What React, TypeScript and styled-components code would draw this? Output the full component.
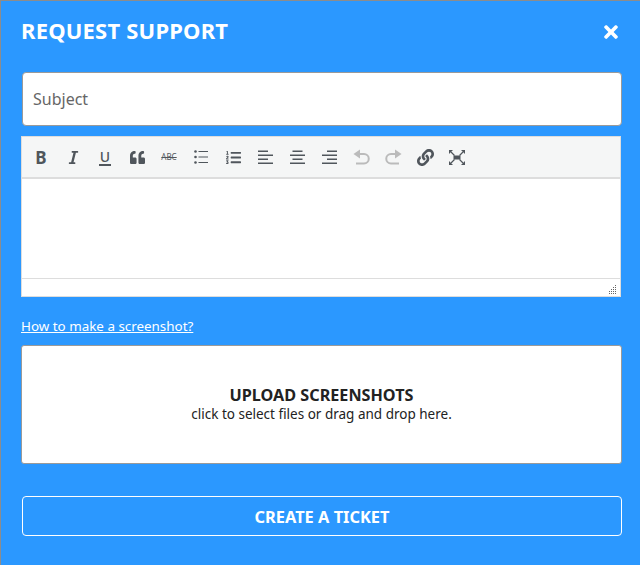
import React from "react";
import styled, { createGlobalStyle } from "styled-components";
import { FaItalic, FaQuoteLeft, FaLink, FaListOl, FaTimes } from "react-icons/fa";

const GlobalStyle = createGlobalStyle`
  html, body {
    margin: 0;
    padding: 0;
    background: #2b98ff;
  }
  * {
    box-sizing: border-box;
  }
`;

const Modal = styled.div`
  width: 640px;
  height: 565px;
  padding: 0 18px 0 21px;
  background: #2b98ff;
  border-top: 1px solid #8c8c8c;
  border-left: 1px solid #8c8c8c;
  font-family: "Noto Sans", "Open Sans", sans-serif;
  overflow: hidden;
`;

const Header = styled.div`
  display: flex;
  justify-content: space-between;
  align-items: center;
  height: 60px;
`;

const Title = styled.h2`
  margin: 0 0 2px -1px;
  font-size: 22px;
  font-weight: 700;
  color: #fff;
  letter-spacing: 0.2px;
`;

const CloseButton = styled.button`
  display: flex;
  padding: 0;
  margin: 2px 1px 0 0;
  border: 0;
  background: none;
  color: #fff;
  font-size: 20px;
`;

const SubjectInput = styled.input`
  display: block;
  width: 600px;
  height: 54px;
  margin: 11px 0 10px 0;
  padding: 0 10px;
  border: 1px solid #9a9a9a;
  border-radius: 4px;
  background: #fff;
  font-family: inherit;
  font-size: 16px;
  color: #333;
  &::placeholder {
    color: #666;
    opacity: 1;
  }
`;

const Editor = styled.div`
  width: 600px;
  margin-left: -1px;
  border: 1px solid #ddd;
  background: #fff;
`;

const Toolbar = styled.div`
  display: flex;
  align-items: center;
  height: 42px;
  padding-left: 3px;
  background: #f5f6f6;
  border-bottom: 2px solid #ddd;
`;

const ToolButton = styled.span<{ $disabled?: boolean; $size?: number }>`
  display: flex;
  align-items: center;
  justify-content: center;
  width: 32px;
  height: 30px;
  color: ${(props) => (props.$disabled ? "#bbb" : "#50565c")};
  font-size: ${(props) => props.$size || 14}px;
`;

const BoldGlyph = styled.span`
  font-size: 17px;
  font-weight: 700;
  line-height: 1;
`;

const UnderGlyph = styled.span`
  font-size: 14px;
  font-weight: 500;
  line-height: 15px;
  padding: 0 1px;
  border-bottom: 2px solid currentColor;
`;

const StrikeGlyph = styled.span`
  font-size: 8px;
  line-height: 1;
  text-decoration: line-through;
`;

const EditArea = styled.div`
  height: 100px;
  border-bottom: 1px solid #ddd;
`;

const StatusBar = styled.div`
  display: flex;
  justify-content: flex-end;
  align-items: flex-end;
  height: 17px;
  padding: 0 3px 2px 0;
`;

const HelpLink = styled.a`
  display: block;
  margin: 19px 0 9px -1px;
  font-size: 13.4px;
  line-height: 20px;
  color: #fff;
  text-decoration: underline;
`;

const DropZone = styled.div`
  display: flex;
  flex-direction: column;
  align-items: center;
  justify-content: center;
  width: 601px;
  height: 119px;
  margin-left: -1px;
  border: 1px solid #9a9a9a;
  border-radius: 3px;
  background: #fff;
  color: #222;
`;

const DropTitle = styled.div`
  font-size: 16.2px;
  font-weight: 700;
  line-height: 19px;
`;

const DropHint = styled.div`
  font-size: 13.5px;
  line-height: 19px;
`;

const SubmitButton = styled.button`
  display: block;
  width: 600px;
  height: 40px;
  margin-top: 32px;
  border: 1px solid #fff;
  border-radius: 4px;
  background: transparent;
  color: #fff;
  font-family: inherit;
  font-size: 16.4px;
  font-weight: 700;
`;

const GRIP_DOTS = [
  [7, 0],
  [7, 2],
  [5, 2],
  [7, 4],
  [5, 4],
  [3, 4],
  [7, 6],
  [5, 6],
  [3, 6],
  [1, 6],
  [7, 8],
  [5, 8],
  [3, 8],
  [1, 8],
];

const ResizeGrip = () => (
  <svg width="9" height="9" viewBox="0 0 9 9" fill="#666">
    {GRIP_DOTS.map(([x, y]) => (
      <rect key={`${x}-${y}`} x={x} y={y} width="1" height="1" />
    ))}
  </svg>
);

const BulletIcon = () => (
  <svg width="14" height="14" viewBox="0 0 14 14" fill="currentColor">
    <circle cx="1.5" cy="1.5" r="1.3" />
    <circle cx="1.5" cy="7" r="1.3" />
    <circle cx="1.5" cy="12.5" r="1.3" />
    <rect x="4.5" y="1" width="9.5" height="1" />
    <rect x="4.5" y="6.5" width="9.5" height="1" />
    <rect x="4.5" y="12" width="9.5" height="1" />
  </svg>
);

const AlignIcon: React.FC<{ side: "left" | "center" | "right" }> = ({ side }) => {
  const shortX = side === "left" ? 0 : side === "center" ? 2.5 : 5;
  return (
    <svg width="15" height="15" viewBox="0 0 15 15" fill="currentColor">
      <rect x={shortX} y="0.5" width="10" height="1.5" />
      <rect x="0" y="4.5" width="15" height="1.5" />
      <rect x={shortX} y="8.5" width="10" height="1.5" />
      <rect x="0" y="12.5" width="15" height="1.5" />
    </svg>
  );
};

const UndoIcon: React.FC<{ flip?: boolean }> = ({ flip }) => (
  <svg
    width="17"
    height="16"
    viewBox="0 0 17 16"
    fill="currentColor"
    transform={flip ? "scale(-1 1)" : undefined}
  >
    <path d="M0.5 5 L7 0.5 V9.5 Z" />
    <path
      d="M6 5 H11 A4.5 4.5 0 0 1 11 14.5 H3"
      fill="none"
      stroke="currentColor"
      strokeWidth="2"
    />
  </svg>
);

const FullscreenIcon = () => (
  <svg width="16" height="15" viewBox="0 0 16 15" fill="currentColor">
    <rect x="4.5" y="5.5" width="7" height="4" />
    <path d="M0 0 H4 L0 4 Z M16 0 H12 L16 4 Z M0 15 H4 L0 11 Z M16 15 H12 L16 11 Z" />
    <path
      d="M2 2 L5.5 5.5 M14 2 L10.5 5.5 M2 13 L5.5 9.5 M14 13 L10.5 9.5"
      stroke="currentColor"
      strokeWidth="1.2"
    />
  </svg>
);

const App: React.FC = () => {
  return (
    <>
      <GlobalStyle />
      <Modal>
        <Header>
          <Title>REQUEST SUPPORT</Title>
          <CloseButton>
            <FaTimes />
          </CloseButton>
        </Header>
        <SubjectInput placeholder="Subject" />
        <Editor>
          <Toolbar>
            <ToolButton><BoldGlyph>B</BoldGlyph></ToolButton>
            <ToolButton $size={15}><FaItalic /></ToolButton>
            <ToolButton><UnderGlyph>U</UnderGlyph></ToolButton>
            <ToolButton $size={15}><FaQuoteLeft /></ToolButton>
            <ToolButton><StrikeGlyph>ABC</StrikeGlyph></ToolButton>
            <ToolButton><BulletIcon /></ToolButton>
            <ToolButton $size={15}><FaListOl /></ToolButton>
            <ToolButton><AlignIcon side="left" /></ToolButton>
            <ToolButton><AlignIcon side="center" /></ToolButton>
            <ToolButton><AlignIcon side="right" /></ToolButton>
            <ToolButton $disabled><UndoIcon /></ToolButton>
            <ToolButton $disabled><UndoIcon flip /></ToolButton>
            <ToolButton $size={17}><FaLink /></ToolButton>
            <ToolButton><FullscreenIcon /></ToolButton>
          </Toolbar>
          <EditArea />
          <StatusBar>
            <ResizeGrip />
          </StatusBar>
        </Editor>
        <HelpLink href="#">How to make a screenshot?</HelpLink>
        <DropZone>
          <DropTitle>UPLOAD SCREENSHOTS</DropTitle>
          <DropHint>click to select files or drag and drop here.</DropHint>
        </DropZone>
        <SubmitButton>CREATE A TICKET</SubmitButton>
      </Modal>
    </>
  );
};

export default App;
